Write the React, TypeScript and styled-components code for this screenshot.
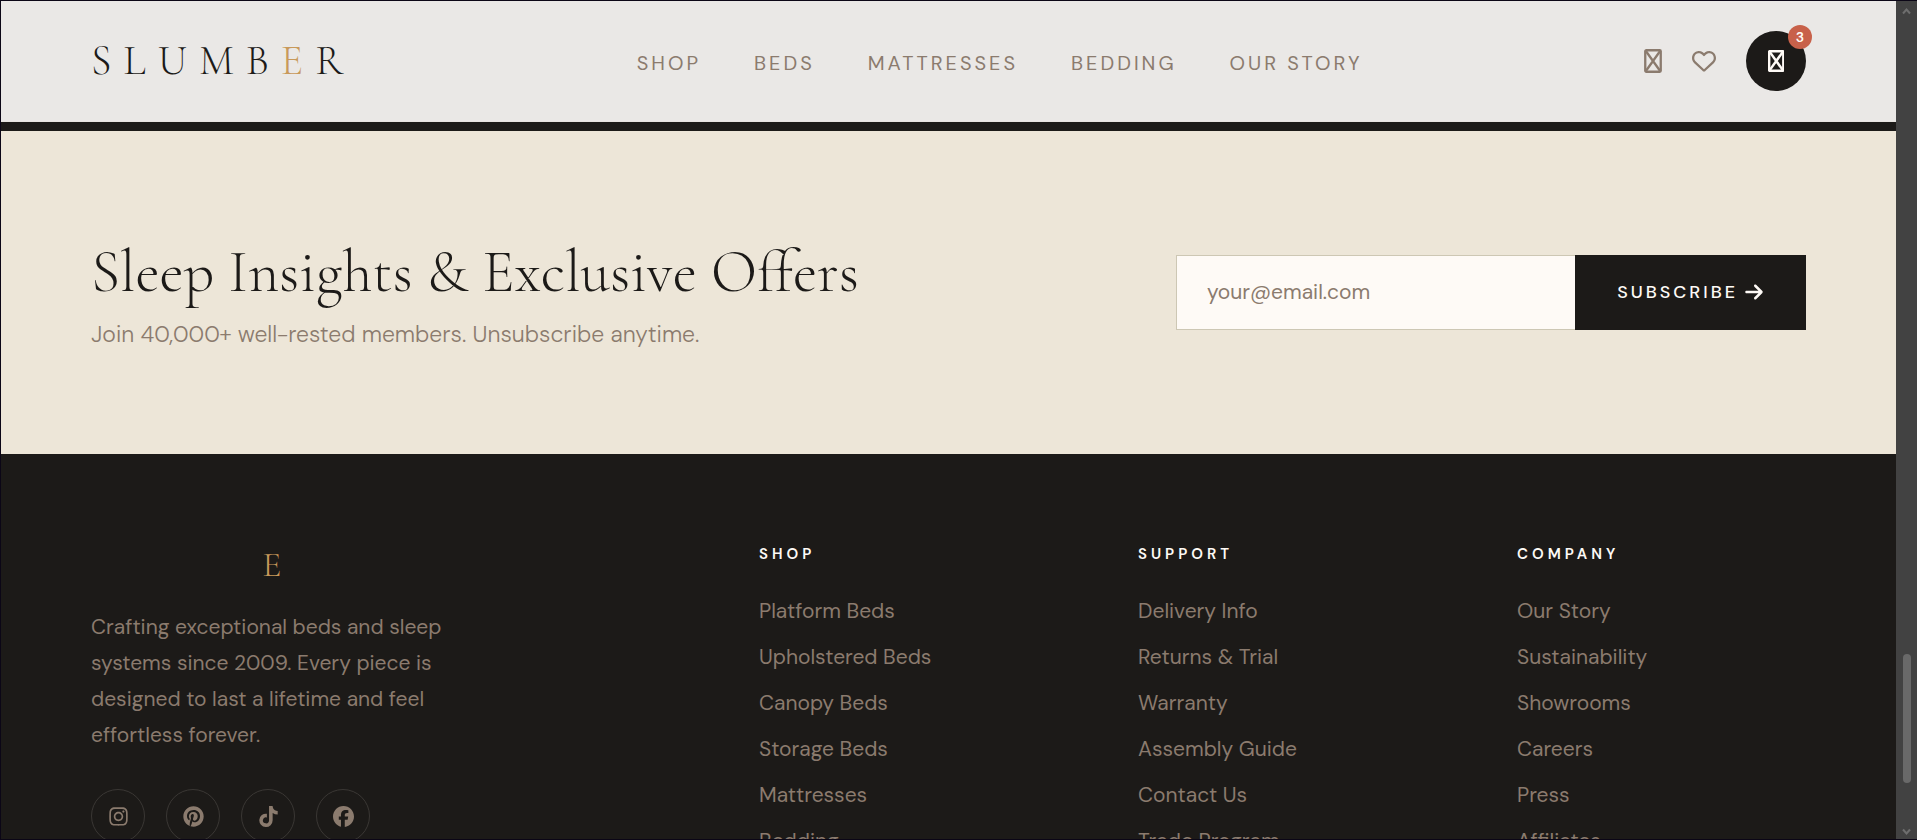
import React from "react";
import styled, { createGlobalStyle } from "styled-components";
import {
  FaArrowRight,
  FaFacebook,
  FaInstagram,
  FaPinterest,
  FaRegHeart,
  FaTiktok,
} from "react-icons/fa6";

const color = {
  ink: "#1c1a18",
  mist: "#eae8e6",
  sand: "#ede6d8",
  paper: "#fefaf6",
  taupe: "#8b7b6e",
  gold: "#c8995a",
  coral: "#c8614a",
  line: "#3a3734",
};

const serif = `"Cormorant Garamond", "Liberation Serif", serif`;
const sans = `"DM Sans", Inter, sans-serif`;

const GlobalStyle = createGlobalStyle`
  *, *::before, *::after { box-sizing: border-box; }
  body { margin: 0; font-family: ${sans}; background: ${color.ink}; }
  h2, h3, p, ul { margin: 0; padding: 0; }
  ul { list-style: none; }
  a { color: inherit; text-decoration: none; }
  button { font: inherit; border: 0; padding: 0; background: none; cursor: pointer; }
  svg { display: block; flex: none; }
`;

const Window = styled.div`
  display: grid;
  grid-template-columns: minmax(0, 1fr) 21px;
  height: 100vh;
  overflow: hidden;
  border: solid #0b0616;
  border-width: 1px 0 1px 1px;
`;

const Page = styled.div`
  overflow: hidden;
`;

const Header = styled.header`
  display: flex;
  align-items: center;
  justify-content: space-between;
  height: 121px;
  padding: 0 90px;
  border-bottom: 1px solid #e7e4e0;
  background: ${color.mist};
`;

const Wordmark = styled.a<{ $size: number }>`
  display: block;
  font-family: ${serif};
  font-size: ${(p) => p.$size}px;
  font-weight: 300;
  line-height: ${(p) => p.$size + 6}px;
  letter-spacing: 12px;
  color: ${color.ink};

  span {
    color: ${color.gold};
  }
`;

const Nav = styled.nav`
  display: flex;
  gap: 53px;
  padding-top: 4px;
`;

const NavLink = styled.a`
  font-size: 20px;
  letter-spacing: 3px;
  text-transform: uppercase;
  color: ${color.taupe};
`;

const Actions = styled.div`
  display: flex;
  align-items: center;
  gap: 30px;
`;

const IconButton = styled.button`
  color: ${color.taupe};
`;

const CartButton = styled.button`
  position: relative;
  display: flex;
  align-items: center;
  justify-content: center;
  width: 60px;
  height: 60px;
  border-radius: 50%;
  background: ${color.ink};
  color: ${color.paper};
`;

const Badge = styled.span`
  position: absolute;
  top: -6px;
  right: -6px;
  width: 24px;
  border-radius: 50%;
  background: ${color.coral};
  color: ${color.paper};
  font-size: 14px;
  font-weight: 600;
  line-height: 24px;
  text-align: center;
`;

const Newsletter = styled.section`
  display: flex;
  align-items: center;
  justify-content: space-between;
  gap: 40px;
  padding: 102px 90px;
  border-top: 9px solid ${color.ink};
  background: ${color.sand};
`;

const Title = styled.h2`
  margin-bottom: 5px;
  font-family: ${serif};
  font-size: 60px;
  font-weight: 300;
  line-height: 78px;
  color: ${color.ink};
`;

const Subtitle = styled.p`
  font-size: 23px;
  font-weight: 300;
  line-height: 36px;
  color: ${color.taupe};
`;

const Form = styled.form`
  display: flex;
  width: 630px;
  height: 75px;
`;

const EmailInput = styled.input`
  flex: 1;
  min-width: 0;
  padding: 0 30px 2px;
  border: 1px solid #cdc7b4;
  border-right: 0;
  border-radius: 0;
  background: ${color.paper};
  font-family: inherit;
  font-size: 21px;
  color: ${color.ink};

  &::placeholder {
    color: ${color.taupe};
    opacity: 1;
  }
`;

const SubscribeButton = styled.button`
  display: flex;
  align-items: center;
  gap: 6px;
  padding: 0 42px 2px;
  background: ${color.ink};
  color: ${color.paper};

  span {
    font-size: 18px;
    font-weight: 500;
    letter-spacing: 3px;
  }
`;

const Footer = styled.footer`
  display: grid;
  grid-template-columns: 2fr 1fr 1fr 1fr;
  gap: 90px;
  padding: 90px;
  background: ${color.ink};
  color: ${color.taupe};
`;

const About = styled.p`
  max-width: 375px;
  margin: 23px 0 36px;
  font-size: 21px;
  line-height: 36px;
`;

const Socials = styled.div`
  display: flex;
  gap: 21px;
`;

const SocialLink = styled.a`
  display: flex;
  align-items: center;
  justify-content: center;
  width: 54px;
  height: 54px;
  border: 1px solid ${color.line};
  border-radius: 50%;
`;

const ColumnTitle = styled.h3`
  margin-bottom: 29px;
  font-size: 15px;
  font-weight: 600;
  line-height: 20px;
  letter-spacing: 4px;
  text-transform: uppercase;
  color: ${color.paper};
`;

const LinkList = styled.ul`
  display: grid;
  gap: 10px;
  font-size: 21px;
  line-height: 36px;
`;

const Scrollbar = styled.div`
  display: flex;
  flex-direction: column;
  align-items: center;
  padding: 6px 0 3px;
  background: #424242;
  color: #6e6e6e;
`;

const Track = styled.div`
  flex: 1;
  display: grid;
  grid-template-rows: 638fr 129fr 44fr;
`;

const Thumb = styled.div`
  grid-row: 2;
  width: 8px;
  border-radius: 4px;
  background: #696969;
`;

const BoxGlyph = ({ height, weight }: { height: number; weight: number }) => (
  <svg
    width={height * 0.75}
    height={height}
    viewBox="0 0 18 24"
    fill="none"
    stroke="currentColor"
    strokeWidth={weight}
    strokeLinejoin="round"
  >
    <rect x="1.250" y="1.250" width="15.500" height="21.500" rx="1" />
    <path d="M1.500 1.500 16.500 22.500M16.500 1.500 1.500 22.500" />
  </svg>
);

const Chevron = ({ d }: { d: string }) => (
  <svg width="9" height="9" viewBox="0 0 9 9" fill="none" stroke="currentColor" strokeWidth="2">
    <path d={d} />
  </svg>
);

const navItems = ["Shop", "Beds", "Mattresses", "Bedding", "Our Story"];

const columns = [
  {
    title: "Shop",
    links: ["Platform Beds", "Upholstered Beds", "Canopy Beds", "Storage Beds", "Mattresses", "Bedding"],
  },
  {
    title: "Support",
    links: ["Delivery Info", "Returns & Trial", "Warranty", "Assembly Guide", "Contact Us", "Trade Program"],
  },
  {
    title: "Company",
    links: ["Our Story", "Sustainability", "Showrooms", "Careers", "Press", "Affiliates"],
  },
];

const socials = [
  { name: "Instagram", Icon: FaInstagram },
  { name: "Pinterest", Icon: FaPinterest },
  { name: "TikTok", Icon: FaTiktok },
  { name: "Facebook", Icon: FaFacebook },
];

const Logo = ({ size }: { size: number }) => (
  <Wordmark href="#" $size={size}>
    SLUMB<span>E</span>R
  </Wordmark>
);

export default function App() {
  return (
    <Window>
      <GlobalStyle />
      <Page>
        <Header>
          <Logo size={42} />
          <Nav>
            {navItems.map((item) => (
              <NavLink key={item} href="#">
                {item}
              </NavLink>
            ))}
          </Nav>
          <Actions>
            <IconButton aria-label="Search">
              <BoxGlyph height={24} weight={2.3} />
            </IconButton>
            <IconButton aria-label="Wishlist">
              <FaRegHeart size={24} />
            </IconButton>
            <CartButton aria-label="Cart, 3 items">
              <BoxGlyph height={22} weight={2.7} />
              <Badge>3</Badge>
            </CartButton>
          </Actions>
        </Header>

        <Newsletter>
          <div>
            <Title>Sleep Insights &amp; Exclusive Offers</Title>
            <Subtitle>Join 40,000+ well-rested members. Unsubscribe anytime.</Subtitle>
          </div>
          <Form onSubmit={(e) => e.preventDefault()}>
            <EmailInput type="email" aria-label="Email address" placeholder="your@email.com" />
            <SubscribeButton type="submit">
              <span>SUBSCRIBE</span>
              <FaArrowRight size={20} />
            </SubscribeButton>
          </Form>
        </Newsletter>

        <Footer>
          <div>
            <Logo size={36} />
            <About>
              Crafting exceptional beds and sleep systems since 2009. Every piece is designed to last a
              lifetime and feel effortless forever.
            </About>
            <Socials>
              {socials.map(({ name, Icon }) => (
                <SocialLink key={name} href="#" aria-label={name}>
                  <Icon size={21} />
                </SocialLink>
              ))}
            </Socials>
          </div>
          {columns.map(({ title, links }) => (
            <div key={title}>
              <ColumnTitle>{title}</ColumnTitle>
              <LinkList>
                {links.map((link) => (
                  <li key={link}>
                    <a href="#">{link}</a>
                  </li>
                ))}
              </LinkList>
            </div>
          ))}
        </Footer>
      </Page>

      <Scrollbar aria-hidden="true">
        <Chevron d="M1 6.500 4.500 2.500 8 6.500" />
        <Track>
          <Thumb />
        </Track>
        <Chevron d="M1 2.500 4.500 6.500 8 2.500" />
      </Scrollbar>
    </Window>
  );
}
